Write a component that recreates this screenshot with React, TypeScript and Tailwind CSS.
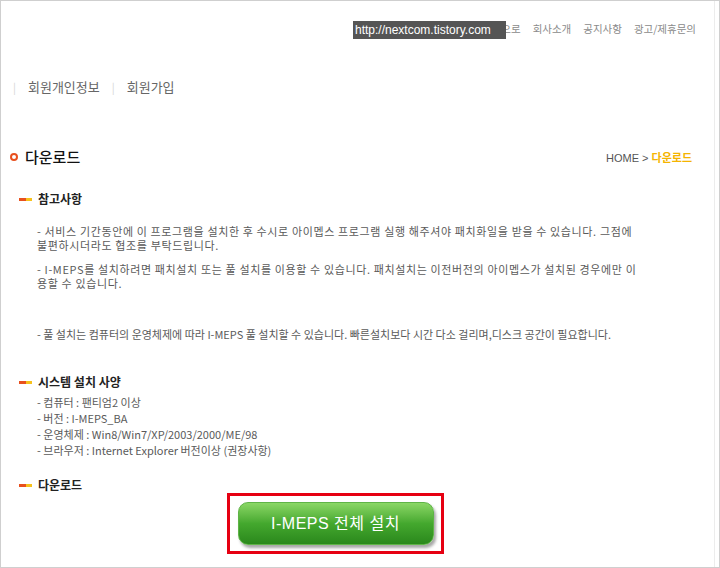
import React from "react";

const KR = { fontFamily: '"Noto Sans CJK KR", "Noto Sans", sans-serif' };

function Bullet() {
  return (
    <span className="flex items-center">
      <span className="block w-[7px] h-[3px] bg-[#e8501e]" />
      <span className="block w-[6px] h-[3px] bg-[#f7c21c]" />
    </span>
  );
}

function SectionHead({ children }: { children: React.ReactNode }) {
  return (
    <div className="flex items-center gap-[6px] pl-[18px] h-[16px]">
      <Bullet />
      <span className="text-[12px] font-bold text-[#222] leading-[16px]">{children}</span>
    </div>
  );
}

export default function App() {
  return (
    <div style={KR} className="relative w-[720px] h-[568px] bg-white border border-[#cfcfcf] overflow-hidden">
      <div className="w-[714px] h-full border-r border-[#ececec] flex flex-col">
        {/* top nav */}
        <div className="h-[56px] flex justify-end items-start pt-[20px] pr-[18px]">
          <div className="flex gap-[12px] text-[10.5px] leading-[16px] text-[#8a8a8a]">
            <span>홈으로</span>
            <span>회사소개</span>
            <span>공지사항</span>
            <span>광고/제휴문의</span>
          </div>
        </div>
        {/* second row */}
        <div className="h-[50px] flex items-center pl-[12px] gap-[12px] text-[13px] text-[#666] pt-[10px]">
          <span className="text-[#d5d5d5] text-[11px]">|</span>
          <span>회원개인정보</span>
          <span className="text-[#d5d5d5] text-[11px]">|</span>
          <span>회원가입</span>
        </div>
        {/* title */}
        <div className="mt-[40px] flex items-center justify-between pl-[9px] pr-[22px] h-[20px]">
          <div className="flex items-center gap-[7px]">
            <span className="block w-[8px] h-[8px] rounded-full border-[2px] border-[#e8501e]" />
            <span className="text-[15px] text-[#111] leading-[20px] font-medium">다운로드</span>
          </div>
          <div className="text-[11px] leading-[14px]">
            <span className="text-[#555]" style={{ fontFamily: '"Liberation Sans", Arial, sans-serif' }}>HOME &gt; </span>
            <span className="text-[#f5b400] font-bold">다운로드</span>
          </div>
        </div>
        {/* 참고사항 */}
        <div className="mt-[24px]">
          <SectionHead>참고사항</SectionHead>
        </div>
        <div className="pl-[36px] text-[11px] text-[#5a5a5a] leading-[14px]">
          <div className="mt-[17px] tracking-[0.63px]">
            <div className="whitespace-nowrap">- 서비스 기간동안에 이 프로그램을 설치한 후 수시로 아이멥스 프로그램 실행 해주셔야 패치화일을 받을 수 있습니다. 그점에</div>
            <div className="whitespace-nowrap">불편하시더라도 협조를 부탁드립니다.</div>
          </div>
          <div className="mt-[10px] tracking-[0.63px]">
            <div className="whitespace-nowrap">- I-MEPS를 설치하려면 패치설치 또는 풀 설치를 이용할 수 있습니다. 패치설치는 이전버전의 아이멥스가 설치된 경우에만 이</div>
            <div className="whitespace-nowrap">용할 수 있습니다.</div>
          </div>
          <div className="mt-[37px]">
            <div className="whitespace-nowrap">- 풀 설치는 컴퓨터의 운영체제에 따라 I-MEPS 풀 설치할 수 있습니다. 빠른설치보다 시간 다소 걸리며,디스크 공간이 필요합니다.</div>
          </div>
        </div>
        {/* 시스템 */}
        <div className="mt-[33px]">
          <SectionHead>시스템 설치 사양</SectionHead>
        </div>
        <div className="pl-[36px] mt-[4px] text-[11px] text-[#5a5a5a] leading-[16px]">
          <div>- 컴퓨터 : 팬티엄2 이상</div>
          <div>- 버전 : I-MEPS_BA</div>
          <div>- 운영체제 : Win8/Win7/XP/2003/2000/ME/98</div>
          <div>- 브라우저 : Internet Explorer 버전이상 (권장사항)</div>
        </div>
        {/* 다운로드 */}
        <div className="mt-[19px]">
          <SectionHead>다운로드</SectionHead>
        </div>
        <div className="flex justify-start pl-[226px]">
          <div className="w-[217px] h-[61px] border-[3px] border-[#e60012] flex items-center justify-center">
            <div className="w-[196px] h-[43px] rounded-[10px] border border-[#5fb447] bg-gradient-to-b from-[#8ad765] via-[#44a82e] to-[#2a881c] shadow-[2px_3px_3px_rgba(0,0,0,0.35)] flex items-center justify-center">
              <span className="text-white text-[16px] tracking-[0.5px]" style={{ fontFamily: '"Liberation Sans", "Noto Sans CJK KR", sans-serif' }}>I-MEPS 전체 설치</span>
            </div>
          </div>
        </div>
      </div>
      {/* watermark url */}
      <div className="absolute left-[352px] top-[20px] h-[18px] w-[153px] bg-[#555] text-white text-[12px] leading-[18px] pl-[2px]" style={{ fontFamily: '"Liberation Sans", Arial, sans-serif' }}>
        http://nextcom.tistory.com
      </div>
    </div>
  );
}
